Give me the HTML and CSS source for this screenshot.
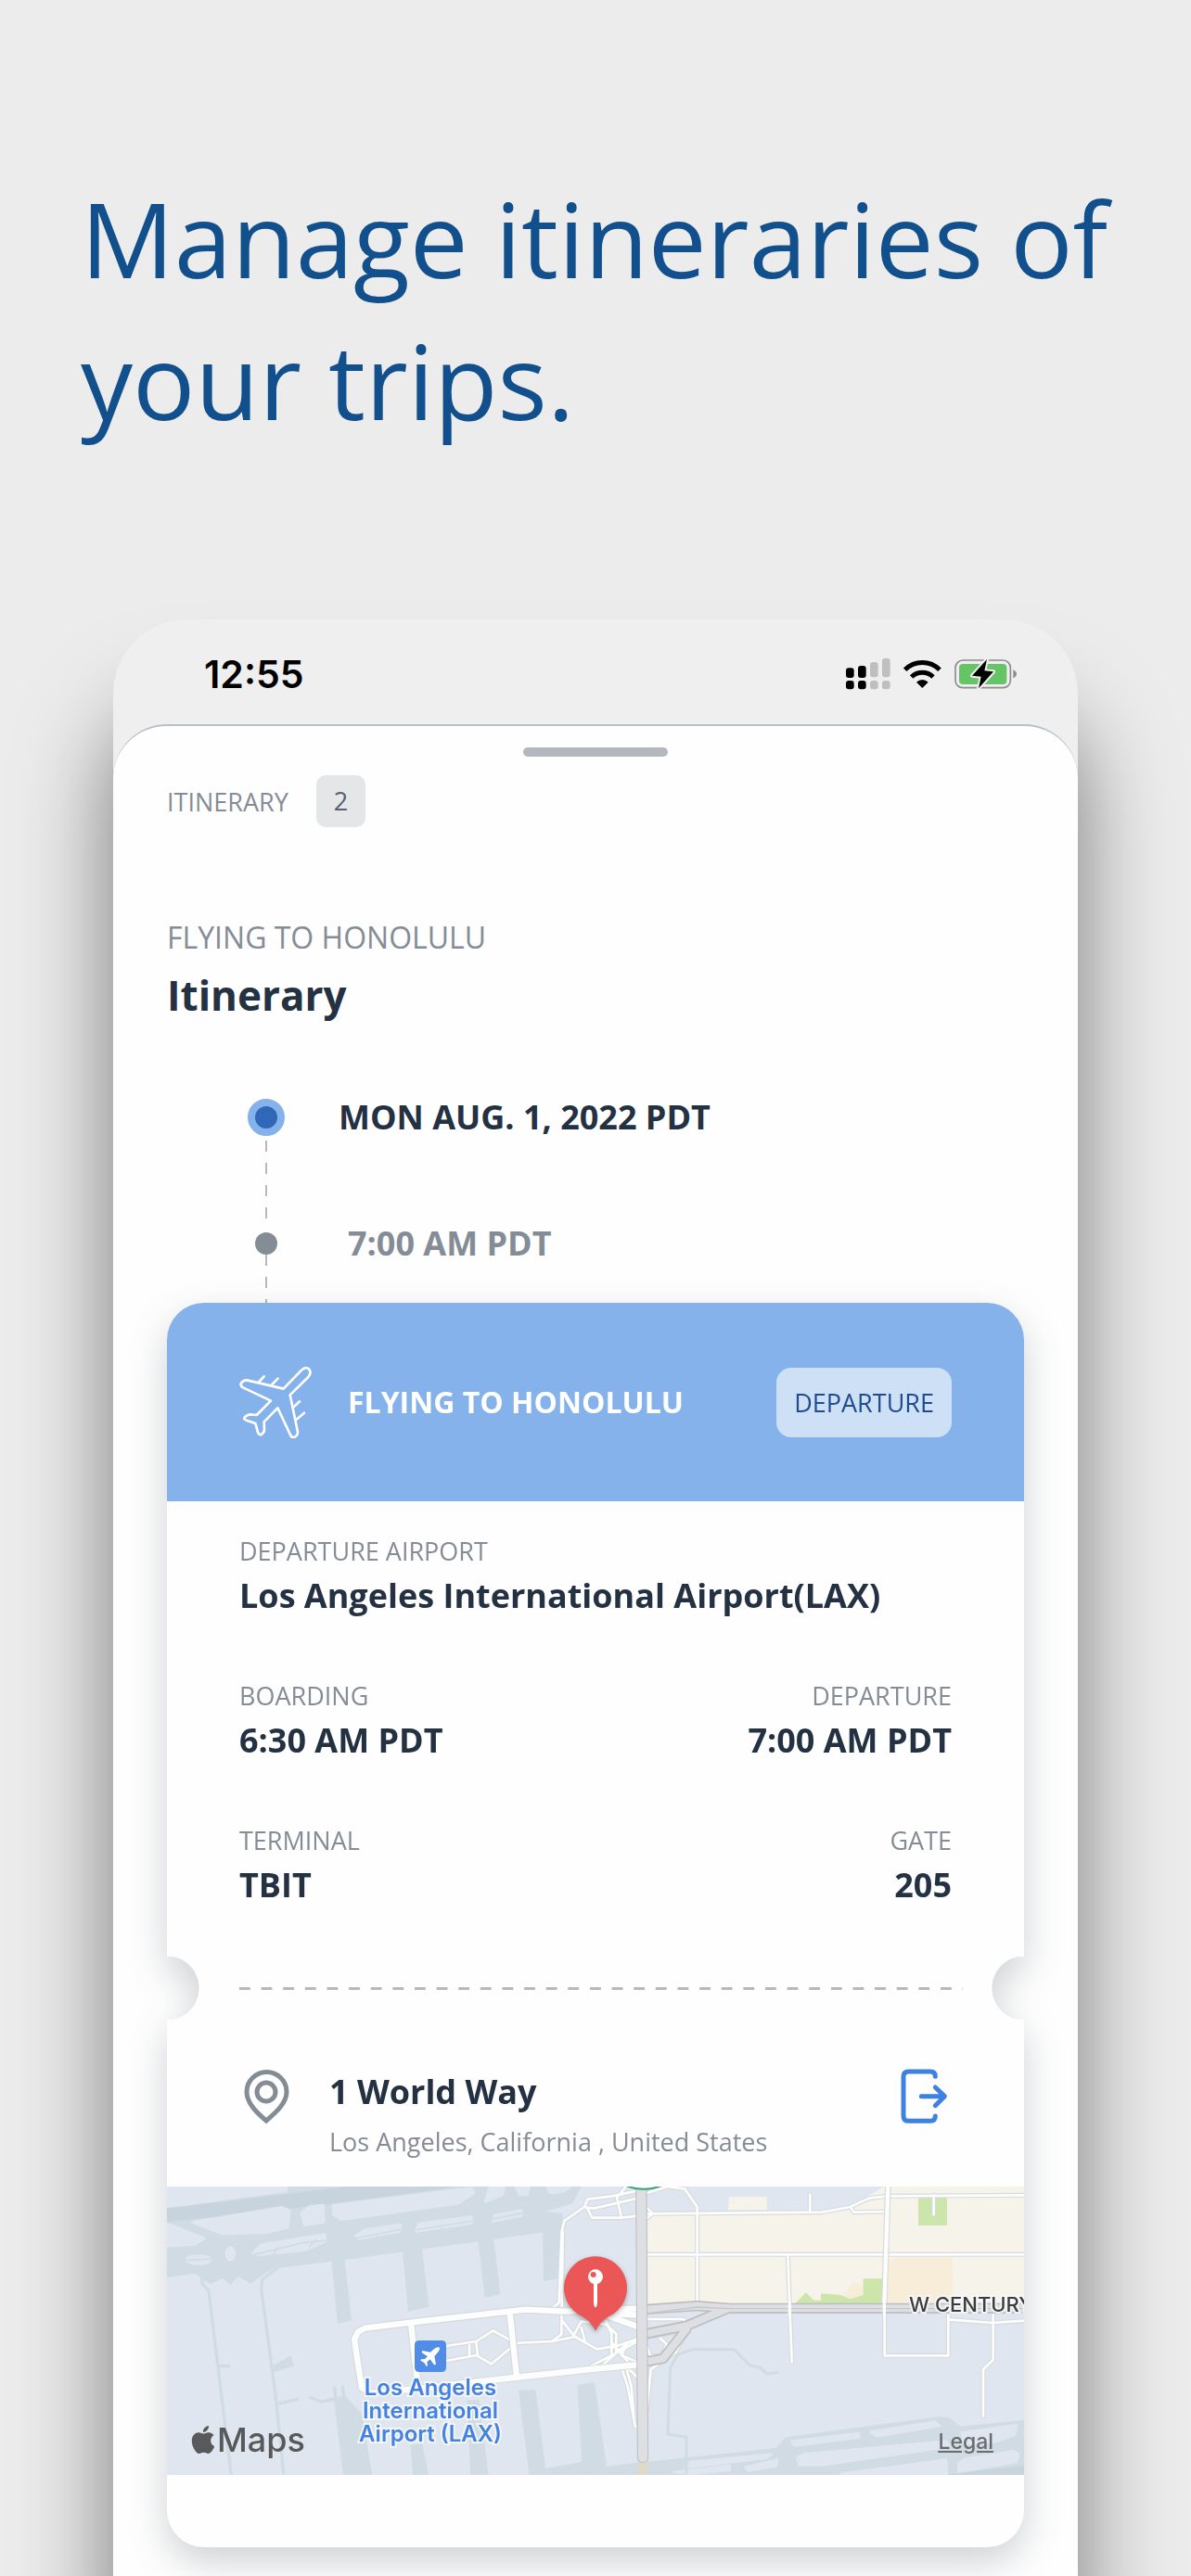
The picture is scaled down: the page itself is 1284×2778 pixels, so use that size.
FILE: index.html
```html
<!DOCTYPE html>
<html lang="en">
<head>
    <meta charset="UTF-8">
    <meta name="viewport" content="width=device-width, initial-scale=1.0">
    <title>Manage itineraries of your trips</title>
    <link rel="stylesheet" href="styles.css">
</head>
<body>
    <header class="intro">
        <h1>Manage itineraries of your trips.</h1>
    </header>

    <main class="phone">
        <div class="status-bar">
            <span class="clock">12:55</span>
            <div class="status-icons">
                <svg width="48" height="34" viewBox="90 60 144 102" aria-hidden="true">
                    <g fill="#000">
                        <rect x="90" y="91" width="26" height="32" rx="9"/>
                        <rect x="129" y="84" width="26" height="39" rx="9"/>
                        <rect x="90" y="132" width="26" height="28" rx="9"/>
                        <rect x="129" y="132" width="26" height="28" rx="9"/>
                    </g>
                    <g fill="#bfbfbf">
                        <rect x="168" y="72" width="26" height="49" rx="9"/>
                        <rect x="207" y="60" width="26" height="61" rx="9"/>
                        <rect x="168" y="132" width="26" height="28" rx="9"/>
                        <rect x="207" y="132" width="26" height="28" rx="9"/>
                    </g>
                </svg>
                <svg width="43" height="33" viewBox="276 60 129 99" aria-hidden="true">
                    <g fill="none" stroke="#000" stroke-width="15">
                        <path d="M284 97A79 79 0 0 1 396 97"/>
                        <path d="M305 120A51 51 0 0 1 375 120"/>
                    </g>
                    <path d="M340 156L321 137A27 27 0 0 1 359 137Z"/>
                </svg>
                <svg width="67" height="33" viewBox="447 60 201 99" aria-hidden="true">
                    <rect x="450" y="66" width="178" height="89" rx="24" fill="none" stroke="#8d8d8d" stroke-width="5"/>
                    <rect x="462" y="78" width="154" height="66" rx="12" fill="#67c466"/>
                    <path d="M637 97Q648 102 648 110Q648 118 637 124Z" fill="#8d8d8d"/>
                    <path class="bolt" d="M552 63L504 116L533 119L525 157L573 103L544 100Z"/>
                </svg>
            </div>
        </div>

        <section class="sheet">
            <div class="handle"></div>

            <div class="tab">
                <span class="label">ITINERARY</span>
                <span class="count">2</span>
            </div>

            <p class="trip-name">FLYING TO HONOLULU</p>
            <h2>Itinerary</h2>

            <ol class="timeline">
                <li class="day">
                    <div class="marker"><span class="dot"></span></div>
                    <span>MON AUG. 1, 2022 PDT</span>
                </li>
                <li class="time">
                    <div class="marker"><span class="dot"></span></div>
                    <span>7:00 AM PDT</span>
                </li>
            </ol>

            <article class="ticket">
                <div class="ticket-header">
                    <svg width="78" height="78" viewBox="54 66 234 234" fill="none" stroke="#fff" stroke-width="8" stroke-linecap="round" stroke-linejoin="round" aria-hidden="true">
                        <path d="M197 140L255 80Q268 67 279 76Q289 88 277 102L218 160L243 280Q243 291 231 298Q224 298 220 291L178 202L134 247L135 272Q134 284 124 289Q116 288 114 280L106 252L77 242Q68 238 70 234Q78 224 88 223L110 225L156 179L66 136Q56 130 60 122Q66 112 78 112Z"/>
                        <path d="M118 117L134 100M160 126L179 107M231 198L249 181M239 239L264 218"/>
                    </svg>
                    <h3>FLYING TO HONOLULU</h3>
                    <span class="tag">DEPARTURE</span>
                </div>

                <dl class="details">
                    <div class="wide">
                        <dt>DEPARTURE AIRPORT</dt>
                        <dd>Los Angeles International Airport(LAX)</dd>
                    </div>
                    <div>
                        <dt>BOARDING</dt>
                        <dd>6:30 AM PDT</dd>
                    </div>
                    <div class="end">
                        <dt>DEPARTURE</dt>
                        <dd>7:00 AM PDT</dd>
                    </div>
                    <div>
                        <dt>TERMINAL</dt>
                        <dd>TBIT</dd>
                    </div>
                    <div class="end">
                        <dt>GATE</dt>
                        <dd>205</dd>
                    </div>
                </dl>

                <div class="tear"><div class="dashes"></div></div>

                <div class="place">
                    <svg width="60" height="60" viewBox="0 0 60 60" fill="none" stroke="#848c96" stroke-width="5" aria-hidden="true">
                        <path d="M29 56C21 49 8 38 8 25A21 21 0 0 1 51 25C51 38 37 49 29 56Z"/>
                        <circle cx="29" cy="25" r="10"/>
                    </svg>
                    <div class="address">
                        <strong>1 World Way</strong>
                        <span>Los Angeles, California , United States</span>
                    </div>
                    <button class="open-button" type="button" aria-label="Open in maps">
                        <svg width="60" height="60" viewBox="81 93 180 180" fill="none" stroke="#3d82e3" stroke-width="15" stroke-linecap="round" stroke-linejoin="round">
                            <path d="M208 118Q208 102 192 102H122Q105 102 105 119V245Q105 262 122 262H192Q208 262 208 246"/>
                            <path d="M163 182H236M208 153L238 182L208 212"/>
                        </svg>
                    </button>
                </div>

                <div class="map">
                    <svg class="map-art" viewBox="60 54 2772 933" preserveAspectRatio="xMidYMid slice" aria-hidden="true">
                        <rect x="60" y="54" width="2772" height="933" fill="#dfe6ef"/>

                        <!-- north airfield -->
                        <path fill="#d0dbe4" d="M60 54H1400L1370 110L1280 135L1340 140L1335 190L1280 202L640 290L400 320L330 368L290 345L265 372L240 350L200 370L150 335L60 348Z"/>
                        <path fill="#c7d4dd" d="M60 125L450 78L640 54H1000L560 115L60 168Z"/>
                        <g fill="#dfe6ef" stroke="#dfe6ef" stroke-width="10" stroke-linejoin="round">
                            <path d="M60 54H445V68L60 118Z"/>
                            <path d="M60 175L180 222L150 240L60 246Z"/>
                            <path d="M145 170L430 122L455 132L450 185L380 203L240 206Z"/>
                            <path d="M495 140L520 120L565 115L567 168L505 178Z"/>
                            <path d="M598 115L1045 60L1052 75L1000 108L625 160L600 145Z"/>
                            <path d="M1105 58L1150 58L1145 80L1090 102Z"/>
                            <path d="M1190 54H1232L1225 80L1200 80Z"/>
                            <path d="M1290 54H1365L1340 70L1300 74Z"/>
                            <path d="M338 270L365 243L570 210L572 230L510 258L360 274Z"/>
                            <path d="M670 215L700 195L815 178L812 198L680 222Z"/>
                            <path d="M865 198L875 175L1045 152L1045 172Z"/>
                            <path d="M1115 165L1120 148L1205 132L1205 148Z"/>
                            <ellipse cx="265" cy="272" rx="12" ry="20"/>
                            <ellipse cx="162" cy="291" rx="38" ry="12"/>
                        </g>
                        <g fill="none" stroke="#d0dbe4" stroke-width="5">
                            <path d="M340 275L500 236L580 228M400 280L420 250M520 250L540 225M665 222L820 192M735 225L745 205M860 195L1050 165M945 195L955 175M1110 160L1210 140M120 293L205 288"/>
                        </g>

                        <!-- aprons between terminals -->
                        <g fill="#d0dbe4">
                            <path d="M592 295L635 288L657 488L612 497Z"/>
                            <path d="M822 262L885 255L908 443L840 458Z"/>
                            <path d="M1065 215L1114 208L1138 402L1088 414Z"/>
                            <path d="M1275 200L1340 190L1330 350L1278 361Z"/>
                            <path d="M600 740L640 735L690 790L724 987H630Z"/>
                            <path d="M848 890L885 885L907 987H855Z"/>
                            <path d="M1030 745H1070L1100 987H1042Z"/>
                            <path d="M1197 715L1252 710L1284 965L1282 987H1232Z"/>
                            <path d="M1387 695L1443 688L1482 960L1500 987H1280L1284 966L1402 945Z"/>
                            <path d="M405 632L460 600L472 634L405 655Z"/>
                        </g>
                        <g fill="none" stroke="#d0dbe4" stroke-width="10">
                            <path d="M170 330L175 370L195 390L240 760L268 987"/>
                            <path d="M420 315L368 355L365 385L410 720L438 987"/>
                            <path d="M225 635H265M415 757L485 742M520 735L560 750L640 735M602 700L605 740M628 698L632 735"/>
                        </g>

                        <!-- south airfield -->
                        <path fill="#d0dbe4" d="M1480 960L1560 950L2030 900L2060 865L2560 798L2590 802L2625 830L2832 810V987H1480Z"/>
                        <path fill="#c7d4dd" d="M2560 987L2832 958V987Z"/>
                        <g fill="#dfe6ef" stroke="#dfe6ef" stroke-width="8" stroke-linejoin="round">
                            <path d="M2080 878L2298 852V866L2090 892Z"/>
                            <path d="M2335 848L2545 815L2560 828L2355 862Z"/>
                            <path d="M2630 850L2808 826L2802 858L2740 880L2640 888Z"/>
                            <path d="M2098 932L2120 920L2580 878L2590 895L2180 955L2105 955Z"/>
                            <path d="M2240 983L2440 957L2580 938L2583 983Z"/>
                            <path d="M2620 950L2640 935L2800 910L2815 920L2808 945L2620 977Z"/>
                            <path d="M1700 978L1880 957V972L1760 983Z"/>
                            <path d="M1930 962L2035 938L2030 958L1940 973Z"/>
                            <path d="M1750 945L2015 920L2000 932L1750 962Z"/>
                        </g>
                        <path fill="none" stroke="#d0dbe4" stroke-width="9" d="M1740 987V865L1680 855L1688 640L1712 598L1760 581H1895L1945 632L1980 640L2000 660L2038 655"/>

                        <!-- city blocks -->
                        <path fill="#f6f3eb" d="M1615 145L2180 137L2270 118L2380 54H2832V430L1615 435Z"/>
                        <path fill="#f6f3eb" d="M1878 87H2000V130H1875Z"/>
                        <path fill="#f8edd8" d="M2395 292L2420 284H2600V430H2390ZM2250 402L2282 360L2316 380V415L2265 418Z"/>
                        <path fill="#cbe5ab" d="M2490 90H2583V180H2490ZM2092 432L2126 397L2152 422H2175V400L2240 405L2270 418L2312 405V352H2373V432Z"/>

                        <!-- streets -->
                        <g class="street-edge">
                            <path d="M1615 142L2180 137L2270 120L2330 92L2390 85L2832 82M2270 120L2282 137L2392 135M1615 274H2832M1775 432V120L1735 62L1680 54L1615 74M2068 274L2074 440L2081 622M2140 135V80M2540 82V145M2587 470V601H2381V440M2587 484L2730 495L2832 488M2732 465V615L2700 645V797"/>
                            <path d="M1590 90L1440 125L1410 120L1345 165L1337 200L1328 430L1310 445M1410 120L1420 95L1500 85L1580 68M1420 125L1435 155H1530L1590 148M1515 90L1530 155M1545 54L1515 90M1615 125L1630 142L1615 155M1340 200L1336 532L1305 555L1195 560"/>
                            <path d="M962 570L1060 555L1115 520L1172 552V575L1110 628L1060 600L962 618M1060 555L1065 600M1038 560V604M1305 555L1380 540L1450 580L1500 572M1340 490L1375 535L1400 490L1480 500L1513 530V590M1400 510L1412 555M1480 490L1498 530V600M1500 575L1600 540M1430 635L1500 600L1590 550M1460 640L1550 560M1500 560L1550 620M1530 640L1550 700L1575 832M1545 640L1562 700L1570 800M1540 630L1600 690"/>
                            <path d="M1615 483H1732L1740 520L1620 540M1655 545L1677 565L1658 605L1622 600L1612 570M1745 520L1705 590L1625 645L1612 780M1530 600L1550 560L1600 545M1530 600L1600 630"/>
                        </g>
                        <g class="street">
                            <path d="M1615 142L2180 137L2270 120L2330 92L2390 85L2832 82M2270 120L2282 137L2392 135M1615 274H2832M1775 432V120L1735 62L1680 54L1615 74M2068 274L2074 440L2081 622M2140 135V80M2540 82V145M2587 470V601H2381V440M2587 484L2730 495L2832 488M2732 465V615L2700 645V797"/>
                            <path d="M1590 90L1440 125L1410 120L1345 165L1337 200L1328 430L1310 445M1410 120L1420 95L1500 85L1580 68M1420 125L1435 155H1530L1590 148M1515 90L1530 155M1545 54L1515 90M1615 125L1630 142L1615 155M1340 200L1336 532L1305 555L1195 560"/>
                            <path d="M962 570L1060 555L1115 520L1172 552V575L1110 628L1060 600L962 618M1060 555L1065 600M1038 560V604M1305 555L1380 540L1450 580L1500 572M1340 490L1375 535L1400 490L1480 500L1513 530V590M1400 510L1412 555M1480 490L1498 530V600M1500 575L1600 540M1430 635L1500 600L1590 550M1460 640L1550 560M1500 560L1550 620M1530 640L1550 700L1575 832M1545 640L1562 700L1570 800M1540 630L1600 690"/>
                            <path d="M1615 483H1732L1740 520L1620 540M1655 545L1677 565L1658 605L1622 600L1612 570M1745 520L1705 590L1625 645L1612 780M1530 600L1550 560L1600 545M1530 600L1600 630"/>
                        </g>
                        <path class="street-edge avenue" d="M2392 54L2380 440"/>
                        <path class="street avenue" d="M2392 54L2380 440"/>

                        <!-- terminal loop -->
                        <path class="street-edge loop" d="M1590 448L1340 458L1220 452L880 490L700 512L678 524L666 550L690 705L720 722L870 708L1130 678L1430 645L1590 630M1590 470L1440 462M1590 510L1480 470M850 505L872 705M1170 472L1190 660"/>
                        <path class="street loop" d="M1590 448L1340 458L1220 452L880 490L700 512L678 524L666 550L690 705L720 722L870 708L1130 678L1430 645L1590 630M1590 470L1440 462M1590 510L1480 470M850 505L872 705M1170 472L1190 660"/>

                        <!-- highways -->
                        <path class="highway-edge" d="M1600 452L1775 440L1880 448H2832M1600 532L1740 505L1870 450M1600 622L1665 610L1740 515"/>
                        <path class="highway" d="M1600 452L1775 440L1880 448H2832M1600 532L1740 505L1870 450M1600 622L1665 610L1740 515"/>
                        <path fill="none" stroke="#c6c6ca" stroke-width="4" d="M1610 465L1775 444L1880 449H2832"/>
                        <path fill="#dedacb" d="M1582 930H1617V987H1582Z"/>
                        <path class="highway-edge main-road" d="M1594 40L1596 440L1599 930"/>
                        <path class="highway main-road" d="M1594 40L1596 440L1599 930"/>
                        <path fill="none" stroke="#fcfdfd" stroke-width="10" d="M2380 420V470M2074 425V470"/>
                        <ellipse cx="1602" cy="0" rx="100" ry="62" fill="#fff" stroke="#38a17c" stroke-width="6"/>

                        <!-- airport badge -->
                        <rect x="861" y="552" width="102" height="102" rx="14" fill="#518de6"/>
                        <path fill="#fff" d="M937 574Q943 573 942 580Q940 587 931 596L925 603L930 630L924 631L911 613L901 622L903 633L899 636L892 624L880 617L883 612L893 613L903 604L884 591L886 585L912 590L920 583Q929 574 937 574Z"/>

                        <!-- location pin -->
                        <path class="pin" d="M1446 280A102 102 0 0 1 1490 474Q1463 488 1446 521Q1429 488 1402 474A102 102 0 0 1 1446 280Z"/>
                        <circle cx="1446" cy="346" r="24" fill="#fff"/>
                        <circle cx="1439" cy="339" r="9" fill="#eb5757"/>
                        <path fill="#fff" d="M1440 368H1452V425Q1451 445 1446 445Q1441 445 1440 425Z"/>
                    </svg>
                    <span class="map-label airport-label">Los Angeles<br>International<br>Airport (LAX)</span>
                    <span class="map-label road-label">W CENTURY</span>
                    <span class="maps-logo">
                        <svg width="30" height="30" viewBox="0 0 24 24" fill="#58595b" aria-hidden="true"><path d="M12.152 6.896c-.948 0-2.415-1.078-3.96-1.04-2.04.027-3.91 1.183-4.961 3.014-2.117 3.675-.546 9.103 1.519 12.09 1.013 1.454 2.208 3.09 3.792 3.039 1.52-.065 2.09-.987 3.935-.987 1.831 0 2.35.987 3.96.948 1.637-.026 2.676-1.48 3.676-2.948 1.156-1.688 1.636-3.325 1.662-3.415-.039-.013-3.182-1.221-3.22-4.857-.026-3.04 2.48-4.494 2.597-4.559-1.429-2.09-3.623-2.324-4.39-2.376-2-.156-3.675 1.09-4.61 1.09zM15.53 3.83c.843-1.012 1.4-2.427 1.245-3.83-1.207.052-2.662.805-3.532 1.818-.78.896-1.454 2.338-1.273 3.714 1.338.104 2.715-.688 3.559-1.701"/></svg>
                        Maps
                    </span>
                    <a class="legal" href="#">Legal</a>
                </div>
                <div class="ticket-footer"></div>
            </article>
        </section>
    </main>
</body>
</html>
```
FILE: styles.css
```css
* {
    box-sizing: border-box;
}

body {
    margin: 0;
    min-height: 100vh;
    display: flex;
    flex-direction: column;
    overflow-x: hidden;
    background-color: #ececec;
    font-family: "Open Sans", sans-serif;
    color: #233142;
}

h1, h2, h3, p, ol, dl, dd {
    margin: 0;
    padding: 0;
}

svg {
    display: block;
    flex-shrink: 0;
}

.intro {
    padding: 180px 64px 182px 87px;
}

h1 {
    font-size: 112px;
    line-height: 153px;
    font-weight: 400;
    color: #11508c;
}

.phone {
    flex: 1;
    display: flex;
    flex-direction: column;
    margin: 0 122px;
    border-radius: 80px 80px 0 0;
    background: #efefef;
    box-shadow: 0 100px 100px rgba(0,0,0,0.5);
}

.status-bar {
    display: flex;
    justify-content: space-between;
    align-items: center;
    height: 113px;
    padding: 4px 66px 0 98px;
}

.clock {
    font-family: Inter, sans-serif;
    font-size: 41px;
    font-weight: 600;
    color: #000;
}

.status-icons {
    display: flex;
    align-items: center;
    gap: 13px;
}

.bolt {
    fill: #000;
    stroke: #efefef;
    stroke-width: 12px;
    stroke-linejoin: round;
    paint-order: stroke;
}

.sheet {
    flex: 1;
    padding: 23px 58px 31px;
    border-top: 2px solid #b9c0c7;
    border-radius: 58px 58px 0 0;
    background: #fefefe;
}

.handle {
    width: 156px;
    height: 10px;
    margin: 0 auto 20px;
    border-radius: 5px;
    background: #b2b8bd;
}

.tab {
    display: flex;
    align-items: center;
    gap: 30px;
    margin-bottom: 97px;
    font-size: 27px;
    color: #848c96;
}

.count {
    padding: 0 19px;
    line-height: 56px;
    border-radius: 10px;
    background: #e4e6e8;
    color: #56606e;
}

.trip-name {
    font-size: 32px;
    line-height: 44px;
    color: #848c96;
}

h2 {
    margin-top: 10px;
    font-size: 44px;
    line-height: 60px;
    font-weight: 700;
}

.timeline {
    margin-top: 77px;
    padding-left: 87px;
    list-style: none;
    font-size: 36px;
    line-height: 50px;
    font-weight: 700;
}

.timeline li {
    display: flex;
    gap: 58px;
}

.day {
    height: 136px;
}

.time {
    height: 89px;
    color: #848c96;
}

.time > span {
    padding-left: 10px;
}

.marker {
    display: flex;
    flex-direction: column;
    align-items: center;
    width: 40px;
    padding-top: 5px;
}

.dot {
    width: 40px;
    height: 40px;
    margin-bottom: 5px;
    border: 8px solid #85b2ea;
    border-radius: 50%;
    background: #2f68b7;
}

.time .marker {
    padding-top: 13px;
}

.time .dot {
    width: 24px;
    height: 24px;
    margin-bottom: 0;
    border: none;
    background: #848c96;
}

.marker::after {
    content: "";
    flex: 1;
    width: 2px;
    background: repeating-linear-gradient(#b4b9be 0 12px, transparent 12px 24px);
}

/* the shadow follows the notches, so it is a filter and not a box-shadow */
.ticket {
    filter: drop-shadow(0 16px 20px rgba(35,49,66,0.22));
}

.ticket-header {
    display: flex;
    align-items: center;
    gap: 39px;
    height: 214px;
    padding: 0 78px;
    border-radius: 40px 40px 0 0;
    background: #85b2ea;
}

h3 {
    flex: 1;
    font-size: 32px;
    line-height: 44px;
    font-weight: 700;
    color: #fff;
}

.tag {
    padding: 19px;
    border-radius: 16px;
    background: #cde0f6;
    font-size: 27px;
    line-height: 37px;
    color: #1f4c8f;
}

.details {
    display: grid;
    grid-template-columns: 1fr 1fr;
    row-gap: 65px;
    padding: 35px 78px 53px;
    background: #fefefe;
}

.wide {
    grid-column: 1 / 3;
}

.end {
    text-align: right;
}

dt {
    margin-bottom: 5px;
    font-size: 27px;
    line-height: 37px;
    color: #848c96;
}

dd {
    font-size: 36px;
    line-height: 49px;
    font-weight: 700;
}

.tear {
    display: flex;
    align-items: center;
    height: 68px;
    padding: 0 66px 0 78px;
    background:
        radial-gradient(circle at 0 50%, transparent 34px, #fefefe 35px) left / 51% 100% no-repeat,
        radial-gradient(circle at 100% 50%, transparent 34px, #fefefe 35px) right / 50% 100% no-repeat;
}

/* whole dashes only, the last gap runs into the padding */
.dashes {
    flex: 1;
    height: 3px;
    background: linear-gradient(90deg, #b4b9be 50%, transparent 50%) 0 0 / 24px 3px round;
}

.place {
    display: flex;
    gap: 37px;
    padding: 53px 78px 30px;
    background: #fefefe;
}

.address {
    flex: 1;
    display: flex;
    flex-direction: column;
    gap: 11px;
}

.address strong {
    font-size: 36px;
    line-height: 49px;
}

.address span {
    font-size: 27px;
    line-height: 37px;
    color: #848c96;
}

.open-button {
    align-self: flex-start;
    padding: 0;
    border: none;
    background: none;
    cursor: pointer;
}

.map {
    position: relative;
    height: 311px;
    overflow: hidden;
    font-family: Inter, sans-serif;
}

.map-art {
    width: 100%;
    height: 100%;
}

.street, .street-edge, .highway, .highway-edge {
    fill: none;
    stroke-linecap: round;
    stroke-linejoin: round;
}

.street {
    stroke: #fcfdfd;
    stroke-width: 8px;
}

.street-edge {
    stroke: #d9dadb;
    stroke-width: 15px;
}

.street.avenue {
    stroke-width: 13px;
}

.street-edge.avenue {
    stroke-width: 20px;
}

.street.loop {
    stroke-width: 19px;
}

.street-edge.loop {
    stroke-width: 26px;
}

.highway {
    stroke: #dedfe2;
    stroke-width: 24px;
}

.highway-edge {
    stroke: #bcbdc1;
    stroke-width: 34px;
}

.highway.main-road {
    stroke-width: 31px;
}

.highway-edge.main-road {
    stroke-width: 37px;
}

.pin {
    fill: #eb5757;
    filter: drop-shadow(0 6px 8px rgba(0,0,0,0.3));
}

.map-label {
    position: absolute;
    -webkit-text-stroke: 4px rgba(245,247,250,0.9);
    paint-order: stroke fill;
}

.airport-label {
    top: 204px;
    left: 204px;
    width: 160px;
    font-size: 24px;
    line-height: 25px;
    font-weight: 600;
    text-align: center;
    white-space: nowrap;
    color: #4481e0;
}

.road-label {
    top: 115px;
    left: 800px;
    font-size: 22px;
    line-height: 25px;
    font-weight: 500;
    white-space: nowrap;
    color: #3c3c3c;
}

.maps-logo {
    position: absolute;
    bottom: 16px;
    left: 24px;
    display: flex;
    align-items: center;
    font-size: 36px;
    line-height: 44px;
    font-weight: 500;
    color: #58595b;
}

.legal {
    position: absolute;
    right: 33px;
    bottom: 22px;
    font-size: 23px;
    line-height: 28px;
    font-weight: 500;
    color: #6b6c70;
}

.ticket-footer {
    height: 78px;
    border-radius: 0 0 40px 40px;
    background: #fefefe;
}
```
